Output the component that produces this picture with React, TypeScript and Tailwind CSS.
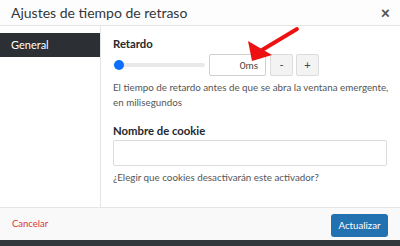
import React from "react";

const font = { fontFamily: 'Lato, "Open Sans", sans-serif' };

const Arrow = () => (
  <svg
    className="absolute left-[246px] top-[24px] pointer-events-none"
    width="56"
    height="42"
    viewBox="0 0 56 42"
  >
    <line x1="51" y1="5" x2="16" y2="26" stroke="#ee1111" strokeWidth="3.8" strokeLinecap="round" />
    <polygon points="6,37 2,17 26,31" fill="#ee1111" />
  </svg>
);

export default function App() {
  return (
    <div className="w-[400px] h-[246px] bg-white flex flex-col relative overflow-hidden text-[#3c434a]" style={font}>
      <div className="h-[26px] flex items-center justify-between pl-[11px] pr-[10px] border-b border-[#e5e5e5] bg-[#fdfdfd] shrink-0">
        <span className="text-[14px] text-[#32373c]">Ajustes de tiempo de retraso</span>
        <span className="text-[16px] font-black text-[#555] leading-none">×</span>
      </div>
      <div className="flex flex-1 min-h-0">
        <div className="w-[101px] border-r border-[#e5e5e5] pt-[7px] shrink-0">
          <div className="h-[24px] bg-[#2c3035] text-white text-[11px] flex items-center pl-[11px]">General</div>
        </div>
        <div className="flex-1 pl-[12px] pr-[12px] pt-[11px]">
          <div className="text-[11.3px] font-bold text-[#23282d] leading-[14px]">Retardo</div>
          <div className="flex items-center mt-[3px] h-[22px]">
            <div className="w-[92px] h-[4px] rounded-full bg-[#e9e9e9] relative mr-[4px]">
              <div className="absolute left-[1px] -top-[3px] w-[10px] h-[10px] rounded-full bg-[#0d6efd]" />
            </div>
            <div className="w-[57px] h-[22px] border border-[#cfcfcf] rounded-[2px] text-[10px] flex items-center justify-end pr-[7px] text-[#444]">0ms</div>
            <div className="ml-[4px] w-[23px] h-[22px] border border-[#dcdcdc] bg-[#f3f3f3] rounded-[2px] text-[11px] flex items-center justify-center">-</div>
            <div className="ml-[3px] w-[23px] h-[22px] border border-[#dcdcdc] bg-[#f3f3f3] rounded-[2px] text-[11px] flex items-center justify-center">+</div>
          </div>
          <p className="mt-[4px] text-[9.8px] leading-[15px] text-[#555] whitespace-nowrap">
            El tiempo de retardo antes de que se abra la ventana emergente,
            <br />
            en milisegundos
          </p>
          <div className="mt-[14px] text-[11.3px] font-bold text-[#23282d] leading-[14px]">Nombre de cookie</div>
          <div className="mt-[2px] w-[274px] h-[26px] border border-[#dcdcdc] rounded-[2px]" />
          <p className="mt-[4px] text-[9.8px] leading-[15px] text-[#555]">¿Elegir que cookies desactivarán este activador?</p>
        </div>
      </div>
      <div className="h-[33px] shrink-0 border-t border-[#e5e5e5] bg-[#f9f9f9] flex items-center justify-between pl-[12px] pr-[12px]">
        <span className="text-[9.5px] text-[#d63638]">Cancelar</span>
        <div className="h-[23px] w-[57px] bg-[#2271b1] rounded-[3px] text-white text-[9.7px] flex items-center justify-center mt-[3px]">Actualizar</div>
      </div>
      <div className="h-[6px] bg-[#32373c] shrink-0" />
      <Arrow />
    </div>
  );
}
